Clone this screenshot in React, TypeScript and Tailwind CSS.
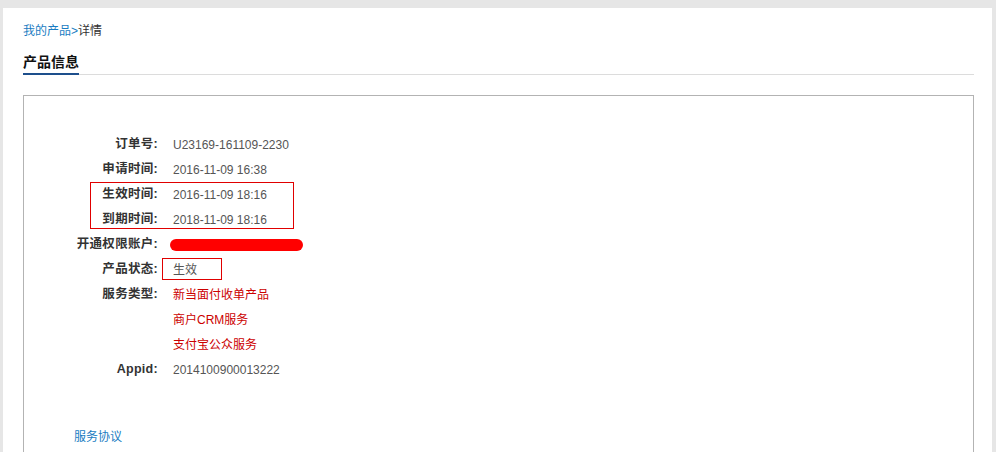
import React from "react";

const rows: { label: string; value: React.ReactNode; red?: boolean }[] = [
  { label: "订单号:", value: "U23169-161109-2230" },
  { label: "申请时间:", value: "2016-11-09 16:38" },
  { label: "生效时间:", value: "2016-11-09 18:16" },
  { label: "到期时间:", value: "2018-11-09 18:16" },
  { label: "开通权限账户:", value: "" },
  { label: "产品状态:", value: "生效" },
  { label: "服务类型:", value: "新当面付收单产品", red: true },
  { label: "", value: "商户CRM服务", red: true },
  { label: "", value: "支付宝公众服务", red: true },
  { label: "Appid:", value: "2014100900013222" },
];

export default function App() {
  return (
    <div
      className="w-[996px] h-[452px] overflow-hidden bg-[#e6e6e6] pt-[8px] pl-[3px] pr-[4px]"
      style={{ fontFamily: '"Liberation Sans", "Noto Sans CJK SC", sans-serif' }}
    >
      <div className="bg-white h-[444px] pl-[20px] pr-[18px] pt-[14px]">
        <div className="text-[12px] leading-[18px] text-[#333]">
          <span className="text-[#1a7cc2]">我的产品</span>
          <span className="text-[#1a7cc2]">&gt;</span>
          <span>详情</span>
        </div>
        <div className="mt-[10px] border-b border-[#dcdcdc]">
          <span className="inline-block text-[14px] leading-[20px] font-bold text-[#111] border-b-[2px] border-[#1d4f8c] -mb-px pb-[1px]">
            产品信息
          </span>
        </div>
        <div className="mt-[20px] border border-[#b3b3b3] border-b-0 h-[400px] pt-[36px] relative">
          {rows.map((r, i) => (
            <div key={i} className="flex h-[25px] items-center text-[12px]">
              <div className="w-[134px] text-right font-bold text-[12.5px] tracking-[0.3px] text-[#333]">{r.label}</div>
              <div className={`ml-[15px] ${r.red ? "text-[#cc0000]" : "text-[#555]"}`}>
                {i === 4 ? (
                  <div className="w-[133px] h-[12px] rounded-[6px] bg-[#ff0000] -ml-[3px] mt-[1px]" />
                ) : (
                  r.value
                )}
              </div>
            </div>
          ))}
          <div className="mt-[47px] ml-[50px] text-[12px] leading-[16px] text-[#1a7cc2]">服务协议</div>
          <div className="absolute left-[66px] top-[86px] w-[204px] h-[47px] border border-[#e00000]" />
          <div className="absolute left-[138px] top-[162px] w-[60px] h-[22px] border border-[#e00000]" />
        </div>
      </div>
    </div>
  );
}
